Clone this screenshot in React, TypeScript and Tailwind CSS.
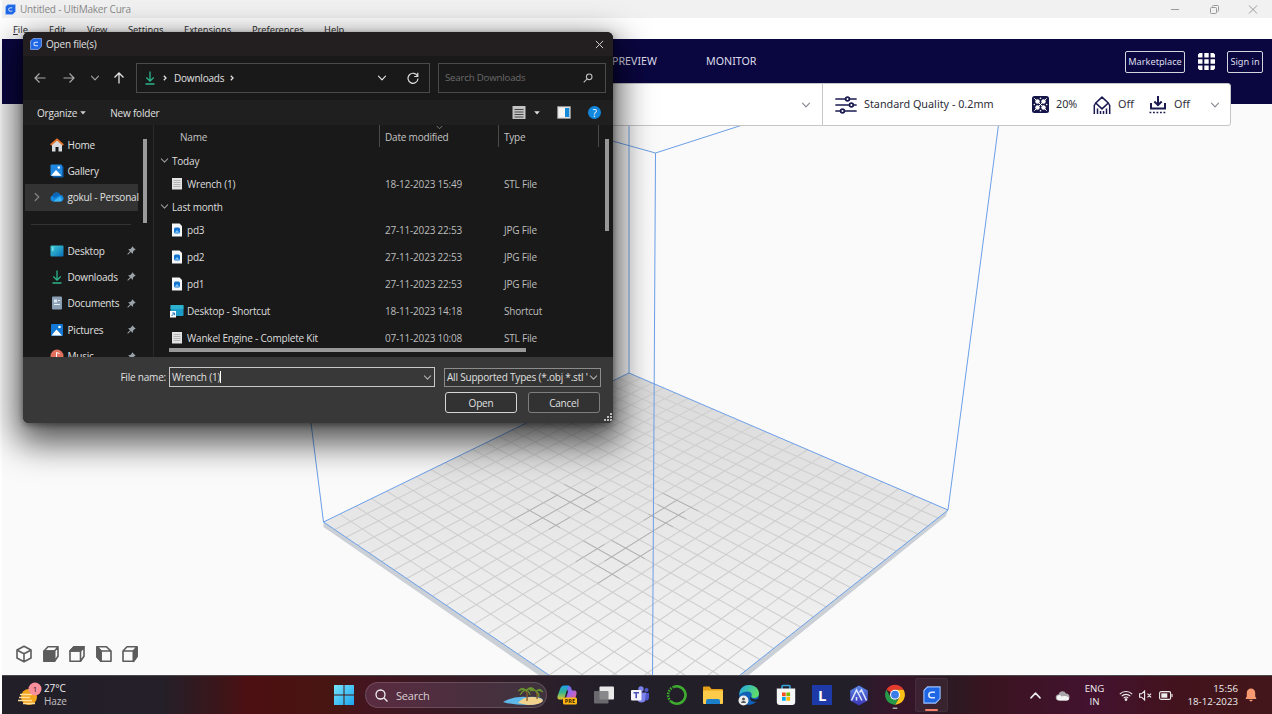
import React from "react";

type Pt = [number, number];

/* ---------- build plate geometry ---------- */
const BACK: Pt = [627, 334];
const RIGHT: Pt = [946, 471];
const FRONT: Pt = [650, 706];
const LEFT: Pt = [321.5, 483];
const CELLS = 23;

function project(u: number, v: number): Pt {
  const dx1 = RIGHT[0] - FRONT[0];
  const dx2 = LEFT[0] - FRONT[0];
  const dx3 = BACK[0] - RIGHT[0] + FRONT[0] - LEFT[0];
  const dy1 = RIGHT[1] - FRONT[1];
  const dy2 = LEFT[1] - FRONT[1];
  const dy3 = BACK[1] - RIGHT[1] + FRONT[1] - LEFT[1];
  const det = dx1 * dy2 - dx2 * dy1;
  const g = (dx3 * dy2 - dx2 * dy3) / det;
  const h = (dx1 * dy3 - dx3 * dy1) / det;
  const a = RIGHT[0] - BACK[0] + g * RIGHT[0];
  const b = LEFT[0] - BACK[0] + h * LEFT[0];
  const d = RIGHT[1] - BACK[1] + g * RIGHT[1];
  const e = LEFT[1] - BACK[1] + h * LEFT[1];
  const w = g * u + h * v + 1;
  return [(a * u + b * v + BACK[0]) / w, (d * u + e * v + BACK[1]) / w];
}

function segment(u1: number, v1: number, u2: number, v2: number) {
  const p = project(u1 / CELLS, v1 / CELLS);
  const q = project(u2 / CELLS, v2 / CELLS);
  return `M${p[0].toFixed(1)} ${p[1].toFixed(1)}L${q[0].toFixed(1)} ${q[1].toFixed(1)}`;
}

const GRID = Array.from({ length: CELLS - 1 }, (_, i) => segment(i + 1, 0, i + 1, CELLS) + segment(0, i + 1, CELLS, i + 1)).join("");

/* darker stretches of grid lines near the middle of the plate: [u1, v1, u2, v2] */
const DARK = (
  [
    [7, 13, 7, 16.4],
    [8, 11, 8, 16],
    [9, 14, 9, 15.5],
    [6.5, 12, 9, 12],
    [6.5, 13, 9.5, 13],
    [6.8, 15, 9.3, 15],
    [9, 11.500, 9, 13],
    [12, 9, 12, 11.600],
    [13, 9.500, 13, 15.500],
    [11, 9, 13.500, 9],
    [11.500, 10, 13.500, 10],
    [11.800, 11, 13.500, 11],
    [14, 13, 14, 17],
    [12, 14, 14.300, 14],
    [11, 15, 14, 15],
    [12.500, 16, 14.500, 16],
    [12, 14.500, 12, 16.500],
  ] as [number, number, number, number][]
)
  .map((s) => segment(...s))
  .join("");

const Scene = () => (
  <svg className="block h-full w-full" viewBox="0 0 1270 636" fill="none">
    <defs>
      <linearGradient id="plate" x1="0" y1="334" x2="0" y2="660" gradientUnits="userSpaceOnUse">
        <stop offset="0" stopColor="#dadada" />
        <stop offset="0.5" stopColor="#e8e8e8" />
        <stop offset="1" stopColor="#f5f5f5" />
      </linearGradient>
    </defs>
    <path d="M321.5 483V488L650 714L944 477L946 471L650 706Z" fill="#cbcfd6" />
    <path d="M627 334L946 471L650 706L321.5 483Z" fill="url(#plate)" />
    <path d={GRID} stroke="#cfcfcf" strokeWidth="1.100" />
    <path d={DARK} stroke="#b2b2b2" strokeWidth="1" />
    <g stroke="#6a9fe8" strokeWidth="1">
      <path d="M627 334L321.5 483L650 706L946 471Z" />
      <path d="M627 334V86M321.5 483L309 384M946 471L996.500 86M653.5 114L650.500 636M653.500 114L740.500 86M653.500 114L560 88" />
    </g>
  </svg>
);

/* ---------- shared icons ---------- */
const CuraLogo = ({ className }: { className: string }) => (
  <svg className={className} viewBox="0 0 20 20">
    <path d="M5 1h14v13l-5 5H1V5z" fill="#1f66e5" stroke="#9cc2ff" strokeWidth="1.200" />
    <path d="M13.300 7H9.500a3 3 0 0 0 0 6h3.800" fill="none" stroke="#d8e7ff" strokeWidth="1.800" />
  </svg>
);
const Chevron = ({ className }: { className: string }) => (
  <svg className={className} viewBox="0 0 10 10" fill="none" stroke="currentColor" strokeWidth="1.200" strokeLinecap="round" strokeLinejoin="round">
    <path d="M1.500 3.200L5 6.800l3.500-3.600" />
  </svg>
);
const Caret = ({ className }: { className: string }) => (
  <svg className={className} viewBox="0 0 8 8" fill="none" stroke="currentColor" strokeWidth="1.300">
    <path d="M2.800 1.800L5 4L2.800 6.200" />
  </svg>
);
const DownloadIcon = () => (
  <svg className="h-[14px] w-[14px]" viewBox="0 0 14 14" fill="none" stroke="#2bb58c" strokeWidth="1.300">
    <path d="M7 .5v9.500M3.300 6.500L7 10.200l3.700-3.700M2.500 13h9" />
  </svg>
);
const Pin = () => (
  <svg className="h-[9px] w-[9px]" viewBox="0 0 10 10">
    <path d="M5.700.3L9.700 4.300 8.200 4.700 6.800 6.200 6.400 8.800 4.300 6.600 1 9.600.4 9 3.400 5.700 1.200 3.600 3.800 3.200 5.300 1.800z" fill="#9aa2a8" />
  </svg>
);
const PictureIcon = () => (
  <svg className="h-[14px] w-[14px]" viewBox="0 0 14 14">
    <rect x="1" y="1" width="12" height="12" rx="1" fill="#1377d4" />
    <path d="M1.500 12.500L6.500 6.500 12 12.500z" fill="#fff" />
    <circle cx="9.500" cy="4" r="1.300" fill="#fff" />
  </svg>
);
const DesktopIcon = () => (
  <svg className="h-[14px] w-[14px]" viewBox="0 0 14 14">
    <defs>
      <linearGradient id="desk" x1="0" y1="0" x2="1" y2="1">
        <stop stopColor="#3fd0d8" />
        <stop offset="1" stopColor="#0a6fb8" />
      </linearGradient>
    </defs>
    <rect x=".5" y="1.500" width="13" height="11" rx="1" fill="url(#desk)" />
    <path d="M2 4h1.500M2 6h1.500" stroke="#cff" />
  </svg>
);
const sideIcons: Record<string, React.ReactNode> = {
  Home: (
    <svg className="h-[14px] w-[14px]" viewBox="0 0 14 14">
      <path d="M2 6v7.500h3.500V9h3v4.500H12V6L7 2z" fill="#d9dadd" />
      <path d="M.7 7L7 1.500 13.300 7" fill="none" stroke="#e8742c" strokeWidth="1.700" />
    </svg>
  ),
  Gallery: (
    <svg className="h-[14px] w-[14px]" viewBox="0 0 14 14">
      <rect x="2.500" y="2" width="11" height="11.500" rx="1" fill="#0b5fae" />
      <rect x=".5" y=".5" width="11.500" height="11.500" rx="1" fill="#2088e0" />
      <path d="M1 11.800L6 6l5.500 5.800z" fill="#fff" />
      <circle cx="8.800" cy="3.500" r="1.200" fill="#fff" />
    </svg>
  ),
  "gokul - Personal": (
    <svg className="h-[14px] w-[14px]" viewBox="0 0 14 14">
      <path d="M3.200 11.500A3.100 3.100 0 0 1 2.500 5.500 4.200 4.200 0 0 1 10.300 5a3.300 3.300 0 0 1 .7 6.500z" fill="#168ae0" />
      <path d="M2.500 5.500A4.200 4.200 0 0 1 10.300 5L4 8z" fill="#0d66b8" />
      <path d="M3.200 11.500L9.500 6.700a3 3 0 0 1 1.500 4.800z" fill="#3fb4f5" />
    </svg>
  ),
  Desktop: <DesktopIcon />,
  Downloads: <DownloadIcon />,
  Documents: (
    <svg className="h-[14px] w-[14px]" viewBox="0 0 14 14">
      <rect x="2" y=".5" width="10" height="13" rx="1" fill="#8b9fb5" />
      <path d="M4 3.500h3v3H4z" fill="#dfe8f1" />
      <path d="M4 8.500h6M8 4.500h2" stroke="#e7edf4" />
    </svg>
  ),
  Pictures: <PictureIcon />,
  Music: (
    <svg className="h-[14px] w-[14px]" viewBox="0 0 14 14">
      <circle cx="7" cy="7" r="6.500" fill="#e0705d" />
      <path d="M6.500 9V3.500l3 1" stroke="#fff" fill="none" />
    </svg>
  ),
};

/* ---------- dialog ---------- */
const SideRow = ({ name, pinned, active }: { name: string; pinned?: boolean; active?: boolean }) => (
  <div className={`flex h-[26.4px] w-[113px] shrink-0 items-center whitespace-nowrap ${active ? "bg-[#333333]" : ""}`}>
    <span className="w-[25px] shrink-0 pl-[7px] text-[#858585]">{active && <Chevron className="h-[10px] w-[10px] -rotate-90" />}</span>
    <span className="shrink-0">{sideIcons[name]}</span>
    <span className="ml-[3.500px] flex-1">{name}</span>
    {pinned && (
      <span className="mr-[2px]">
        <Pin />
      </span>
    )}
  </div>
);

const FileIcon = ({ kind }: { kind: string }) => {
  if (kind === "Shortcut")
    return (
      <svg className="h-[14px] w-[14px]" viewBox="0 0 14 14">
        <rect x=".5" y="1" width="13" height="11" rx="1" fill="#1e9cc9" />
        <path d="M.5 1h13v4H.5z" fill="#39c0d2" opacity=".6" />
        <rect x="0" y="7" width="6" height="6.500" fill="#fff" />
        <path d="M1.500 12l3-3M2.300 9h2.300v2.300" stroke="#1670c0" fill="none" />
      </svg>
    );
  if (kind === "JPG File")
    return (
      <svg className="h-[14px] w-[14px]" viewBox="0 0 14 14">
        <path d="M2 .5h7.500L12 3v10.500H2z" fill="#f4f6f8" />
        <rect x="4" y="4.500" width="6" height="6" rx="1.500" fill="#1473cf" />
        <path d="M4.500 9.800L7 7l2.500 2.800z" fill="#7cc4f7" />
      </svg>
    );
  return (
    <svg className="h-[14px] w-[14px]" viewBox="0 0 14 14">
      <path d="M2 1h10v11.500H2z" fill="#e3e3e3" />
      <path d="M3.500 3.500h7M3.500 5.500h7M3.500 7.500h7M3.500 9.500h7" stroke="#aaa" strokeWidth=".8" />
    </svg>
  );
};

const FileRow = ({ name, date, kind }: { name: string; date: string; kind: string }) => (
  <div className="flex h-[27px] shrink-0 items-center whitespace-nowrap pl-[15px]">
    <FileIcon kind={kind} />
    <span className="ml-[3px] w-[198px] text-[#dedede]">{name}</span>
    <span className="w-[119px] text-[#bdbdbd]">{date}</span>
    <span className="text-[#bdbdbd]">{kind}</span>
  </div>
);
const Group = ({ name }: { name: string }) => (
  <div className="flex h-[19px] shrink-0 items-center gap-[3px] pl-[5px] text-[#dedede]">
    <Chevron className="h-[9px] w-[9px] text-[#9a9a9a]" />
    {name}
  </div>
);

const Dialog = () => (
  <div className="absolute left-[23px] top-[32px] flex h-[391px] w-[590px] flex-col overflow-hidden rounded-[6px] bg-[#191919] font-['Open_Sans','Noto_Sans',sans-serif] text-[10px] leading-[14px] tracking-[-0.2px] text-[#e0e0e0] shadow-[0_14px_34px_6px_rgba(0,0,0,0.68),0_2px_6px_rgba(0,0,0,0.4)]">
    <div className="flex h-[24px] shrink-0 items-center bg-[#231f20] pl-[7px] pr-[9px]">
      <CuraLogo className="h-[12px] w-[12px]" />
      <span className="ml-[4px] flex-1">Open file(s)</span>
      <svg className="h-[9px] w-[9px]" viewBox="0 0 10 10" stroke="#d0d0d0" strokeWidth="1.100">
        <path d="M1 1l8 8M9 1L1 9" />
      </svg>
    </div>
    <div className="flex h-[44px] shrink-0 items-center">
      <div className="flex w-[113px] shrink-0 items-center pl-[11px]">
        <svg className="h-[12px] w-[12px]" viewBox="0 0 12 12" fill="none" stroke="#a9a9a9" strokeWidth="1.200">
          <path d="M11.500 6H1M5.500 1.500L1 6l4.500 4.500" />
        </svg>
        <svg className="ml-[17px] h-[12px] w-[12px]" viewBox="0 0 12 12" fill="none" stroke="#a9a9a9" strokeWidth="1.200">
          <path d="M.5 6H11M6.500 1.500L11 6l-4.500 4.500" />
        </svg>
        <Chevron className="ml-[15px] h-[10px] w-[10px] text-[#a0a0a0]" />
        <svg className="ml-[13px] h-[12px] w-[12px]" viewBox="0 0 12 12" fill="none" stroke="#e4e4e4" strokeWidth="1.300">
          <path d="M6 11.500V1M1.500 5.500L6 1l4.500 4.500" />
        </svg>
      </div>
      <div className="flex h-[30px] w-[294px] shrink-0 items-center border border-[#4a4a4a] pl-[6px]">
        <DownloadIcon />
        <Caret className="ml-[4px] h-[8px] w-[8px]" />
        <span className="ml-[5px]">Downloads</span>
        <Caret className="ml-[4px] h-[8px] w-[8px]" />
        <Chevron className="ml-auto h-[10px] w-[10px]" />
        <svg className="ml-[20px] mr-[10px] h-[12px] w-[12px]" viewBox="0 0 12 12" fill="none" stroke="#dcdcdc" strokeWidth="1.200">
          <path d="M10.600 4.300A5 5 0 1 0 11 6.500M10.800.8v3.700H7.200" />
        </svg>
      </div>
      <div className="ml-[8px] flex h-[30px] w-[168px] shrink-0 items-center justify-between border border-[#4a4a4a] pl-[6px] pr-[12px] text-[#6b6b6b]">
        <span className="text-[9.700px]">Search Downloads</span>
        <svg className="h-[10px] w-[10px]" viewBox="0 0 10 10" fill="none" stroke="#c0c0c0" strokeWidth="1.100">
          <circle cx="6.200" cy="3.800" r="2.800" />
          <path d="M4.200 5.900L.7 9.400" />
        </svg>
      </div>
    </div>
    <div className="flex h-[25px] shrink-0 items-center bg-[#1f1f1f] pl-[14px]">
      <span>Organize</span>
      <svg className="ml-[3px] h-[4px] w-[6px]" viewBox="0 0 6 4">
        <path d="M.2.300h5.600L3 3.500z" fill="#ccc" />
      </svg>
      <span className="ml-[24px]">New folder</span>
      <svg className="ml-auto h-[13px] w-[14px]" viewBox="0 0 14 13">
        <rect x=".5" width="13" height="13" fill="#c4c4c4" />
        <path d="M2.500 3.500h9M2.500 6h9M2.500 8.500h9M2.500 11h9" stroke="#444" />
      </svg>
      <svg className="ml-[8px] h-[4px] w-[6px]" viewBox="0 0 6 4">
        <path d="M.2.300h5.600L3 3.500z" fill="#ddd" />
      </svg>
      <svg className="ml-[17px] h-[13px] w-[14px]" viewBox="0 0 14 13">
        <rect x=".7" y=".7" width="12.600" height="11.600" fill="#f4f4f4" stroke="#9a9a9a" />
        <path d="M8 2h4.300v9H8z" fill="#1489d8" />
      </svg>
      <span className="ml-[17px] mr-[12px] flex h-[13px] w-[13px] items-center justify-center rounded-full bg-[#1287dc] text-[10px] text-white">?</span>
    </div>

    <div className="flex h-[232px] shrink-0 overflow-hidden">
      <div className="flex w-[131px] shrink-0 gap-[5px] overflow-hidden border-r border-[#2a2a2a] pl-[2px]">
        <div className="flex flex-col pt-[6.500px]">
          <SideRow name="Home" />
          <SideRow name="Gallery" />
          <SideRow name="gokul - Personal" active />
          <div className="flex h-[26.7px] shrink-0 items-center">
            <div className="ml-[6px] h-px w-[100px] bg-[#333333]" />
          </div>
          <SideRow name="Desktop" pinned />
          <SideRow name="Downloads" pinned />
          <SideRow name="Documents" pinned />
          <SideRow name="Pictures" pinned />
          <SideRow name="Music" pinned />
        </div>
        <div className="mt-[14px] h-[84px] w-[4px] shrink-0 bg-[#9a9a9a]" />
      </div>
      <div className="flex w-[451px] shrink-0 flex-col">
        <div className="flex h-[26px] shrink-0 items-start text-[#c4c4c4]">
          <span className="flex h-[22px] w-[226px] items-center border-r border-[#4a4a4a] pl-[26px] pt-px">Name</span>
          <span className="relative flex h-[22px] w-[119px] items-center border-r border-[#4a4a4a] pl-[5px] pt-px">
            Date modified
            <Chevron className="absolute left-[56px] top-[-1px] h-[7px] w-[7px] text-[#888]" />
          </span>
          <span className="flex h-[22px] w-[100px] items-center border-r border-[#4a4a4a] pl-[5px] pt-px">Type</span>
        </div>
        <div className="flex h-[193px] shrink-0 flex-col overflow-hidden pl-px">
          <Group name="Today" />
          <FileRow name="Wrench (1)" date="18-12-2023 15:49" kind="STL File" />
          <Group name="Last month" />
          <FileRow name="pd3" date="27-11-2023 22:53" kind="JPG File" />
          <FileRow name="pd2" date="27-11-2023 22:53" kind="JPG File" />
          <FileRow name="pd1" date="27-11-2023 22:53" kind="JPG File" />
          <FileRow name="Desktop - Shortcut" date="18-11-2023 14:18" kind="Shortcut" />
          <FileRow name="Wankel Engine - Complete Kit" date="07-11-2023 10:08" kind="STL File" />
        </div>
        <div className="ml-[15px] mt-[4px] h-[4px] w-[357px] bg-[#989898]" />
      </div>
      <div className="mt-[14px] h-[92px] w-[4px] bg-[#989898]" />
    </div>

    <div className="flex h-[66px] shrink-0 flex-col bg-[#383838] pt-[10px]">
      <div className="flex items-center whitespace-nowrap">
        <span className="w-[146px] pr-[3px] text-right">File name:</span>
        <div className="flex h-[20px] w-[266px] items-center border border-[#c8c8c8] pl-[2px] pr-[2px]">
          Wrench (1)
          <span className="h-[12px] w-px bg-white" />
          <Chevron className="ml-auto h-[9px] w-[9px] text-[#b0b0b0]" />
        </div>
        <div className="ml-[9px] flex h-[19px] w-[157px] items-center border border-[#8c8c8c] bg-[#333333] pl-[2px] pr-[2px]">
          <span className="whitespace-nowrap">All Supported Types (*.obj *.stl '</span>
          <Chevron className="ml-auto h-[9px] w-[9px] shrink-0 text-[#b0b0b0]" />
        </div>
      </div>
      <div className="mt-[5px] flex pl-[422px]">
        <div className="flex h-[21px] w-[72px] items-center justify-center rounded-[3px] border border-[#d5d5d5] bg-[#323232]">Open</div>
        <div className="ml-[11px] flex h-[21px] w-[72px] items-center justify-center rounded-[3px] border border-[#7e7e7e] bg-[#323232]">Cancel</div>
        <svg className="ml-[4px] mt-[21px] h-[8px] w-[8px]" viewBox="0 0 8 8" fill="#bdbdbd">
          <path d="M6 0h2v2H6zM6 3h2v2H6zM6 6h2v2H6zM3 3h2v2H3zM3 6h2v2H3zM0 6h2v2H0z" />
        </svg>
      </div>
    </div>
  </div>
);

/* ---------- print settings strip ---------- */
const SettingsBar = () => (
  <div className="absolute left-[300px] top-[83px] flex h-[43px] w-[931px] items-center whitespace-nowrap rounded-[3px] border border-[#c6c6c8] bg-white text-[10.800px] text-[#2e2e38]">
    <div className="flex h-full w-[522px] items-center justify-end border-r border-[#c6c6c8] pr-[11px] text-[#8b8b95]">
      <Chevron className="h-[10px] w-[10px]" />
    </div>
    <svg className="ml-[12px] h-[18px] w-[22px]" viewBox="0 0 22 18" fill="none" stroke="#1a1a50" strokeWidth="1.700" strokeLinecap="round">
      <path d="M1 3h9.500M14.500 3H21M1 9h13M18.500 9H21M1 15h4.500M9.500 15H21" />
      <circle cx="12.500" cy="3" r="1.900" />
      <circle cx="16.400" cy="9" r="1.900" />
      <circle cx="7.500" cy="15" r="1.900" />
    </svg>
    <span className="ml-[7px] w-[168px]">Standard Quality - 0.2mm</span>
    <svg className="h-[17px] w-[17px]" viewBox="0 0 17 17">
      <rect width="17" height="17" rx="2.500" fill="#151548" />
      <path d="M2.300 2.300l12.400 12.400M14.700 2.300L2.300 14.700" stroke="#fff" strokeWidth="1" />
      <g fill="#fff">
        <circle cx="5.500" cy="5.500" r="2.200" />
        <circle cx="11.500" cy="5.500" r="2.200" />
        <circle cx="5.500" cy="11.500" r="2.200" />
        <circle cx="11.500" cy="11.500" r="2.200" />
        <circle cx="8.500" cy="2.300" r=".8" />
        <circle cx="8.500" cy="14.700" r=".8" />
        <circle cx="2.300" cy="8.500" r=".8" />
        <circle cx="14.700" cy="8.500" r=".8" />
      </g>
    </svg>
    <span className="ml-[7px] w-[37px]">20%</span>
    <svg className="h-[18px] w-[18px]" viewBox="0 0 18 18" fill="none" stroke="#1a1a50" strokeWidth="1.600">
      <path d="M9 1.200l6.300 5.800L9 12.800 2.700 7z" strokeLinejoin="round" />
      <path d="M2.700 7L1.300 9.500M15.300 7l1.400 2.500M1.300 9v9M4.500 12.500V18M7.500 15V18M10.500 15V18M13.500 12.500V18M16.700 9v9" strokeWidth="1.500" />
    </svg>
    <span className="ml-[7px] w-[31px]">Off</span>
    <svg className="h-[18px] w-[18px]" viewBox="0 0 18 18" fill="none" stroke="#1a1a50" strokeWidth="2">
      <path d="M9 0v9M5.300 5.500L9 9l3.700-3.500M2 7v5.500h14V7" />
      <path d="M.5 16.500h17" strokeWidth="1.600" strokeDasharray="1.800 1.700" />
    </svg>
    <span className="ml-[7px] w-[36px]">Off</span>
    <Chevron className="h-[10px] w-[10px] text-[#8b8b95]" />
  </div>
);

/* ---------- view cubes ---------- */
const cubes: [string, string][] = [
  ["M9 1.300L16 5v8l-7 3.800L2 13V5zM2.300 5.200L9 8.800l6.700-3.600M9 8.800v7.700", ""],
  ["M2 6l4-4.200h10v9.500l-3.500 5H2zM2 6h10.500v10.300M12.500 6L16 2", "M2 6h10.500v10.300H2z"],
  ["M2 6l4-4.200h10v9.500l-3.500 5H2zM2 6h10.500v10.300M12.500 6L16 2", "M2 6l4-4.200h10L12.500 6z"],
  ["M2 1.800h9.500l4.500 4.200v10.300H6L2 12zM2 1.800L6 6h10M6 6v10.300", "M2 1.800L6 6v10.300L2 12z"],
  ["M2 6l4-4.200h10v9.500l-3.500 5H2zM2 6h10.500v10.300M12.500 6L16 2", "M12.500 6L16 2v9.500l-3.500 4.800z"],
];

/* ---------- taskbar ---------- */
const taskIcons: React.ReactNode[] = [
  <svg key="copilot" className="h-[20px] w-[20px]" viewBox="0 0 20 20">
    <defs>
      <linearGradient id="cp" x1="0" y1="0" x2="1" y2="1">
        <stop stopColor="#4a7cf0" />
        <stop offset=".5" stopColor="#a466e8" />
        <stop offset="1" stopColor="#ef5f8d" />
      </linearGradient>
      <linearGradient id="cp2" x1="0" y1="0" x2="0" y2="1">
        <stop stopColor="#1fa0ea" />
        <stop offset=".5" stopColor="#38b48c" />
        <stop offset="1" stopColor="#e8c82c" />
      </linearGradient>
    </defs>
    <path d="M9 1h3q1.500 0 2 1.500l1 3h2.500Q20 5.500 19.500 9L18 14.500H8.500L11 7z" fill="url(#cp)" />
    <path d="M6.500.5h6q-1.500.5-2 2.500L7.800 12Q7 14.500 5 14.500H2.500Q0 14.500.5 11L3.500 3Q4.500.5 6.500.5z" fill="url(#cp2)" />
    <rect x="6" y="12.500" width="14" height="7" rx="1.500" fill="#fdb915" />
    <text x="13" y="18.200" fontSize="5.600" fontWeight="700" textAnchor="middle" fill="#3c2200" fontFamily="Open Sans">PRE</text>
  </svg>,
  <svg key="tasks" className="h-[20px] w-[20px]" viewBox="0 0 20 20">
    <rect x="5.500" y="1.500" width="14.500" height="13" rx="1" fill="#e9e9ea" />
    <rect y="6" width="14.500" height="12.500" rx="1" fill="#77777a" opacity=".85" />
  </svg>,
  <svg key="teams" className="h-[18px] w-[20px]" viewBox="0 0 20 18">
    <circle cx="11" cy="3" r="2.700" fill="#7b83eb" />
    <circle cx="16.500" cy="4" r="2" fill="#5059c9" />
    <path d="M7 6.500h9V12a4.500 4.500 0 0 1-9 0z" fill="#7b83eb" />
    <path d="M16 7h3v4.500a3 3 0 0 1-4 2.800z" fill="#5059c9" />
    <rect x="1" y="4" width="10.500" height="10.500" rx="1" fill="#f5f5fb" />
    <path d="M3.500 6.800h5.500M6.200 6.800v5.500" stroke="#4a52b8" strokeWidth="1.600" />
  </svg>,
  <svg key="ring" className="h-[22px] w-[22px]" viewBox="0 0 22 22" fill="none" stroke="#3fae2e">
    <path d="M8 2.800A8.700 8.700 0 1 1 5 17.500" strokeWidth="2.600" />
    <path d="M5 17.500A8.700 8.700 0 0 1 8 2.800" strokeWidth="2.600" strokeDasharray="1.500 1.200" />
  </svg>,
  <svg key="folder" className="h-[20px] w-[22px]" viewBox="0 0 22 20">
    <path d="M1 2.500q0-1 1-1h5.500l2 2.500H20q1 0 1 1V17H1z" fill="#e5a019" />
    <rect x="1" y="5.500" width="20" height="13.500" rx="1" fill="#fccb4a" />
    <path d="M4 19v-3q0-2 2-2h10q2 0 2 2v3z" fill="#1b80c9" />
  </svg>,
  <svg key="edge" className="h-[22px] w-[22px]" viewBox="0 0 22 22">
    <defs>
      <linearGradient id="eg" x1="0" y1="0" x2="1" y2=".4">
        <stop stopColor="#22a7e8" />
        <stop offset="1" stopColor="#5ddc6a" />
      </linearGradient>
    </defs>
    <circle cx="11" cy="11" r="10" fill="#1060b8" />
    <path d="M1.500 9C2 4 6 1 11 1c6 0 10 4 10 8.500 0 3-2.500 4.500-5 4.500-2 0-3-.8-2.500-2 .8-2-.5-4.500-4-4.500-3 0-6.500 1-8 3.500z" fill="url(#eg)" />
    <path d="M12.500 12.500c.5 3 4.500 3.800 8 2.300l1.500 1-2 1.500c-5 1.500-9-1-7.500-4.800z" fill="#231d28" />
    <circle cx="5.500" cy="16.500" r="5" fill="#ececec" />
    <circle cx="5.500" cy="15" r="1.500" fill="#555" />
    <path d="M3 19q0-2 2.500-2T8 19z" fill="#555" />
  </svg>,
  <svg key="store" className="h-[22px] w-[20px]" viewBox="0 0 20 22">
    <path d="M6 5V2.500q0-1 1-1h6q1 0 1 1V5" fill="none" stroke="#35a5da" strokeWidth="1.600" />
    <path d="M.8 4.500h18.400V18q0 3-3 3H3.800q-3 0-3-3z" fill="#f5f6f8" />
    <path d="M6 8.500h3.700v3.700H6z" fill="#f25022" />
    <path d="M10.400 8.500h3.700v3.700h-3.700z" fill="#7fba00" />
    <path d="M6 13h3.700v3.700H6z" fill="#00a4ef" />
    <path d="M10.400 13h3.700v3.700h-3.700z" fill="#ffb900" />
  </svg>,
  <span key="l" className="flex h-[20px] w-[20px] items-center justify-center bg-[#1d3aa8] text-[15px] font-bold leading-none text-white">L</span>,
  <svg key="hex" className="h-[21px] w-[20px]" viewBox="0 0 20 21">
    <defs>
      <linearGradient id="hx" x1="0" y1="0" x2="0" y2="1">
        <stop stopColor="#5c86e8" />
        <stop offset="1" stopColor="#3a34b4" />
      </linearGradient>
    </defs>
    <path d="M10 .5l8.800 5v10L10 20.500l-8.800-5v-10z" fill="url(#hx)" />
    <path d="M2.500 15.500L7.500 5l5.500 10.500M7.500 12v3.500M10.500 7.500L12.500 5l5 10.500" fill="none" stroke="#dfe9ff" strokeWidth="1.500" />
  </svg>,
  <svg key="chrome" className="h-[28px] w-[20px]" viewBox="0 0 20 28">
    <path d="M10 13.700L1.400 8.700A10 10 0 0 1 18.600 8.700H10z" fill="#e33b2e" />
    <path d="M10 13.700L10 8.700H18.600A10 10 0 0 1 10 23.700l4.300-7.500z" fill="#fbc116" />
    <path d="M1.400 8.700l4.300 7.500 4.300 2.500 3.500-.5L10 23.700A10 10 0 0 1 1.400 8.700z" fill="#269a48" />
    <circle cx="10" cy="13.700" r="5" fill="#fff" />
    <circle cx="10" cy="13.700" r="3.900" fill="#3b7de8" />
    <rect x="7.500" y="26.500" width="5" height="1.500" rx=".7" fill="#aaa" />
  </svg>,
  <span key="cura" className="flex h-[34px] w-[33px] flex-col items-center rounded-[3px] border border-white/5 bg-white/5 pt-[7px]">
    <CuraLogo className="h-[18px] w-[18px]" />
    <span className="mt-[5px] h-[2px] w-[13px] rounded-full bg-[#f2826c]" />
  </span>,
];

const Taskbar = () => (
  <div className="relative flex h-[39px] shrink-0 items-center whitespace-nowrap border-t border-[#4b474c] bg-[linear-gradient(90deg,#221f29_0px,#241f28_160px,#3c1519_220px,#4d0f12_245px,#471612_330px,#43151f_365px,#2c1f2a_540px,#221f29_600px,#221f29_850px,#37152a_890px,#2c1922_950px,#3a1420_990px,#43122f_1090px,#42131c_1180px,#42161a_1270px)] font-['Open_Sans','Noto_Sans',sans-serif] text-[10px] leading-[13px] text-[#eeeeee]">
    <div className="flex w-[332px] items-center pl-[16px]">
      <svg className="h-[26px] w-[24px]" viewBox="0 0 24 26">
        <circle cx="11" cy="15" r="8" fill="#f3a51d" />
        <path d="M0 18.500h14M1 15.500h11M2 12.500h12M5 21.500h12" stroke="#ffdf9c" strokeWidth="1.600" />
        <circle cx="17" cy="7" r="6.500" fill="#f98f9a" />
        <text x="17" y="10" fontSize="8" textAnchor="middle" fill="#3a1a20" fontFamily="Open Sans">1</text>
      </svg>
      <div className="ml-[2px] tracking-[-0.1px]">
        <div>27°C</div>
        <div className="text-[#c4c0c4]">Haze</div>
      </div>
    </div>
    <svg className="h-[20px] w-[20px]" viewBox="0 0 20 20">
      <defs>
        <linearGradient id="win" x1="0" y1="0" x2="1" y2="1">
          <stop stopColor="#76e4fb" />
          <stop offset="1" stopColor="#1ba4ee" />
        </linearGradient>
      </defs>
      <path d="M0 0h9.500v9.500H0zM10.500 0H20v9.500h-9.500zM0 10.500h9.500V20H0zM10.500 10.500H20V20h-9.500z" fill="url(#win)" />
    </svg>
    <div className="ml-[11px] flex h-[26px] w-[182px] items-center rounded-full border border-white/15 bg-[linear-gradient(90deg,#5a2b40,#3f333e)] pl-[9px] pr-[2px]">
      <svg className="h-[13px] w-[13px]" viewBox="0 0 13 13" fill="none" stroke="#f0f0f0" strokeWidth="1.300">
        <circle cx="5.500" cy="5.500" r="4.500" />
        <path d="M8.800 8.800L12.500 12.500" />
      </svg>
      <span className="ml-[8px] text-[11px] tracking-[-0.2px] text-[#d8d0d4]">Search</span>
      <svg className="ml-auto h-[20px] w-[41px]" viewBox="0 0 41 20">
        <path d="M0 17q9-6 24-5 14-1 16 3-2 5-16 5T0 17z" fill="#5fb8ea" />
        <path d="M15 18q5-7 16-6 9 1 9 4-3 4-15 4z" fill="#f0d28c" />
        <path d="M24 16q1-6-1-11M34 14q1-4-1-8" stroke="#8a5a2c" strokeWidth="1.400" fill="none" />
        <path d="M23 5q-4-4-8 1 4-2 8-1-4 0-6 5 3-4 6-5 5-5 9 0-4-1-9 0 4 1 4 5-1-3-4-5zM33 6q-3-4-6 0 3-1 6 0 4-4 7 1-3-2-7-1 4 2 3 6-1-4-3-6z" fill="#6c9a2e" stroke="#6c9a2e" strokeWidth=".7" />
      </svg>
    </div>
    <div className="ml-[2px] flex items-center">
      {taskIcons.map((icon, i) => (
        <span key={i} className="flex h-[38px] w-[36.45px] items-center justify-center">
          {icon}
        </span>
      ))}
    </div>
    <div className="ml-auto flex items-center pr-[15px]">
      <Chevron className="h-[13px] w-[13px] rotate-180" />
      <svg className="ml-[13px] h-[11px] w-[15px]" viewBox="0 0 15 11">
        <path d="M4 10.500a3 3 0 0 1-.5-6A4 4 0 0 1 11 3.500a3.500 3.500 0 0 1 0 7z" fill="#aaa6aa" />
        <path d="M4 10.500a2.800 2.800 0 0 1 0-5.500q2 0 3 1.500 1-.8 3-.5 4 .5 4 2.500t-3 2z" fill="#f4f4f4" />
      </svg>
      <div className="ml-[14px] w-[21px] text-center text-[9.700px]">
        <div>ENG</div>
        <div>IN</div>
      </div>
      <svg className="ml-[14px] h-[11px] w-[14px]" viewBox="0 0 14 11" fill="none" stroke="#eee" strokeWidth="1.100">
        <path d="M.8 4.200a8.600 8.600 0 0 1 12.400 0M2.700 6.200a6 6 0 0 1 8.600 0M4.700 8.100a3.300 3.300 0 0 1 4.600 0" />
        <circle cx="7" cy="9.600" r=".8" fill="#eee" />
      </svg>
      <svg className="ml-[6px] h-[11px] w-[13px]" viewBox="0 0 13 11" fill="none" stroke="#eee" strokeWidth="1.100">
        <path d="M.6 3.800h2L5.600 1v9L2.600 7.200h-2zM8.500 3.700l3.600 3.600M12.100 3.700L8.500 7.300" />
      </svg>
      <svg className="ml-[7px] h-[9px] w-[14px]" viewBox="0 0 14 9" fill="none" stroke="#eee" strokeWidth="1.100">
        <rect x=".6" y=".6" width="11" height="7.800" rx="1.500" />
        <path d="M2.300 2.300h6v4.400h-6z" fill="#eee" stroke="none" />
        <path d="M13 3v3" />
      </svg>
      <div className="ml-[13px] w-[52px] text-right text-[9.700px]">
        <div>15:56</div>
        <div>18-12-2023</div>
      </div>
      <svg className="ml-[7px] h-[14px] w-[12px]" viewBox="0 0 12 14" fill="#f79a72">
        <path d="M6 .5a4.200 4.200 0 0 1 4.200 4.200v3.600L11.500 11H.5l1.300-2.700V4.700A4.200 4.200 0 0 1 6 .5zM4.300 11.700h3.400a1.700 1.700 0 0 1-3.400 0z" />
      </svg>
    </div>
  </div>
);

export default function App() {
  return (
    <div className="relative flex h-[714px] w-[1272px] flex-col overflow-hidden bg-white pl-[2px] font-['Noto_Sans',sans-serif] text-[10px]">
      <div className="flex h-[18px] shrink-0 items-center bg-[#f1f1f1] pl-[3px] pr-[14px] text-[#8a8a8a]">
        <CuraLogo className="h-[11px] w-[11px]" />
        <span className="ml-[4px] flex-1 pt-px font-['Open_Sans',sans-serif] text-[10px] tracking-[-0.2px]">Untitled - UltiMaker Cura</span>
        <svg className="h-[9px] w-[88px]" viewBox="0 0 88 9" fill="none" stroke="#9a9a9a">
          <path d="M1 4.500h8M79 .5l8 8M87 .5l-8 8" />
          <rect x="40.500" y="2.500" width="6" height="6" rx="1" />
          <path d="M42.500 2V1.500q0-1 1-1h4q1 0 1 1v4q0 1-1 1" />
        </svg>
      </div>
      <div className="flex h-[21px] shrink-0 items-center bg-white pl-[11px] pt-[2.500px] text-[9.300px] text-[#303030]">
        <span className="w-[36px]"><span className="underline">F</span>ile</span>
        <span className="w-[38px]">Edit</span>
        <span className="w-[41px]">View</span>
        <span className="w-[56px]">Settings</span>
        <span className="w-[68px]">Extensions</span>
        <span className="w-[72px]">Preferences</span>
        <span>Help</span>
      </div>
      <div className="relative h-[636px] shrink-0 bg-[#fafafa]">
        <div className="flex h-[65px] bg-[#0a0640] text-[#dedeea]">
          <div className="flex h-[45px] flex-1 items-center whitespace-nowrap pl-[610px] pr-[9px]">
            <span className="w-[94px] text-[10.700px]">PREVIEW</span>
            <span className="flex-1 text-[10.700px]">MONITOR</span>
            <span className="flex h-[22px] w-[60px] items-center justify-center rounded-[2px] border border-[#d5d5e0] text-[9.200px]">Marketplace</span>
            <svg className="ml-[13px] h-[17px] w-[17px]" viewBox="0 0 17 17" fill="#fff">
              <path d="M1.500 0H4.500V4.500H0V1.500zM6.300 0h4.400v4.500H6.300zM12.500 0h3L17 1.500v3h-4.500zM0 6.300h4.500v4.400H0zM6.300 6.300h4.400v4.400H6.300zM12.500 6.300H17v4.400h-4.500zM0 12.500h4.500V17h-3L0 15.500zM6.300 12.500h4.400V17H6.300zM12.500 12.500H17v3L15.500 17h-3z" />
            </svg>
            <span className="ml-[12px] flex h-[22px] w-[36px] items-center justify-center rounded-[2px] border border-[#d5d5e0] text-[9.200px]">Sign in</span>
          </div>
        </div>
        <div className="absolute inset-0">
          <Scene />
        </div>
        <div className="absolute bottom-[12px] left-[13px] flex gap-[8.500px]">
          {cubes.map(([line, face], i) => (
            <svg key={i} className="h-[18px] w-[18px]" viewBox="0 0 18 18" fill="none" stroke="#5c5c5c" strokeWidth="1.600" strokeLinejoin="round">
              <path d={line} />
              {face && <path d={face} fill="#5c5c5c" />}
            </svg>
          ))}
        </div>
      </div>
      <Taskbar />
      <SettingsBar />
      <Dialog />
    </div>
  );
}
